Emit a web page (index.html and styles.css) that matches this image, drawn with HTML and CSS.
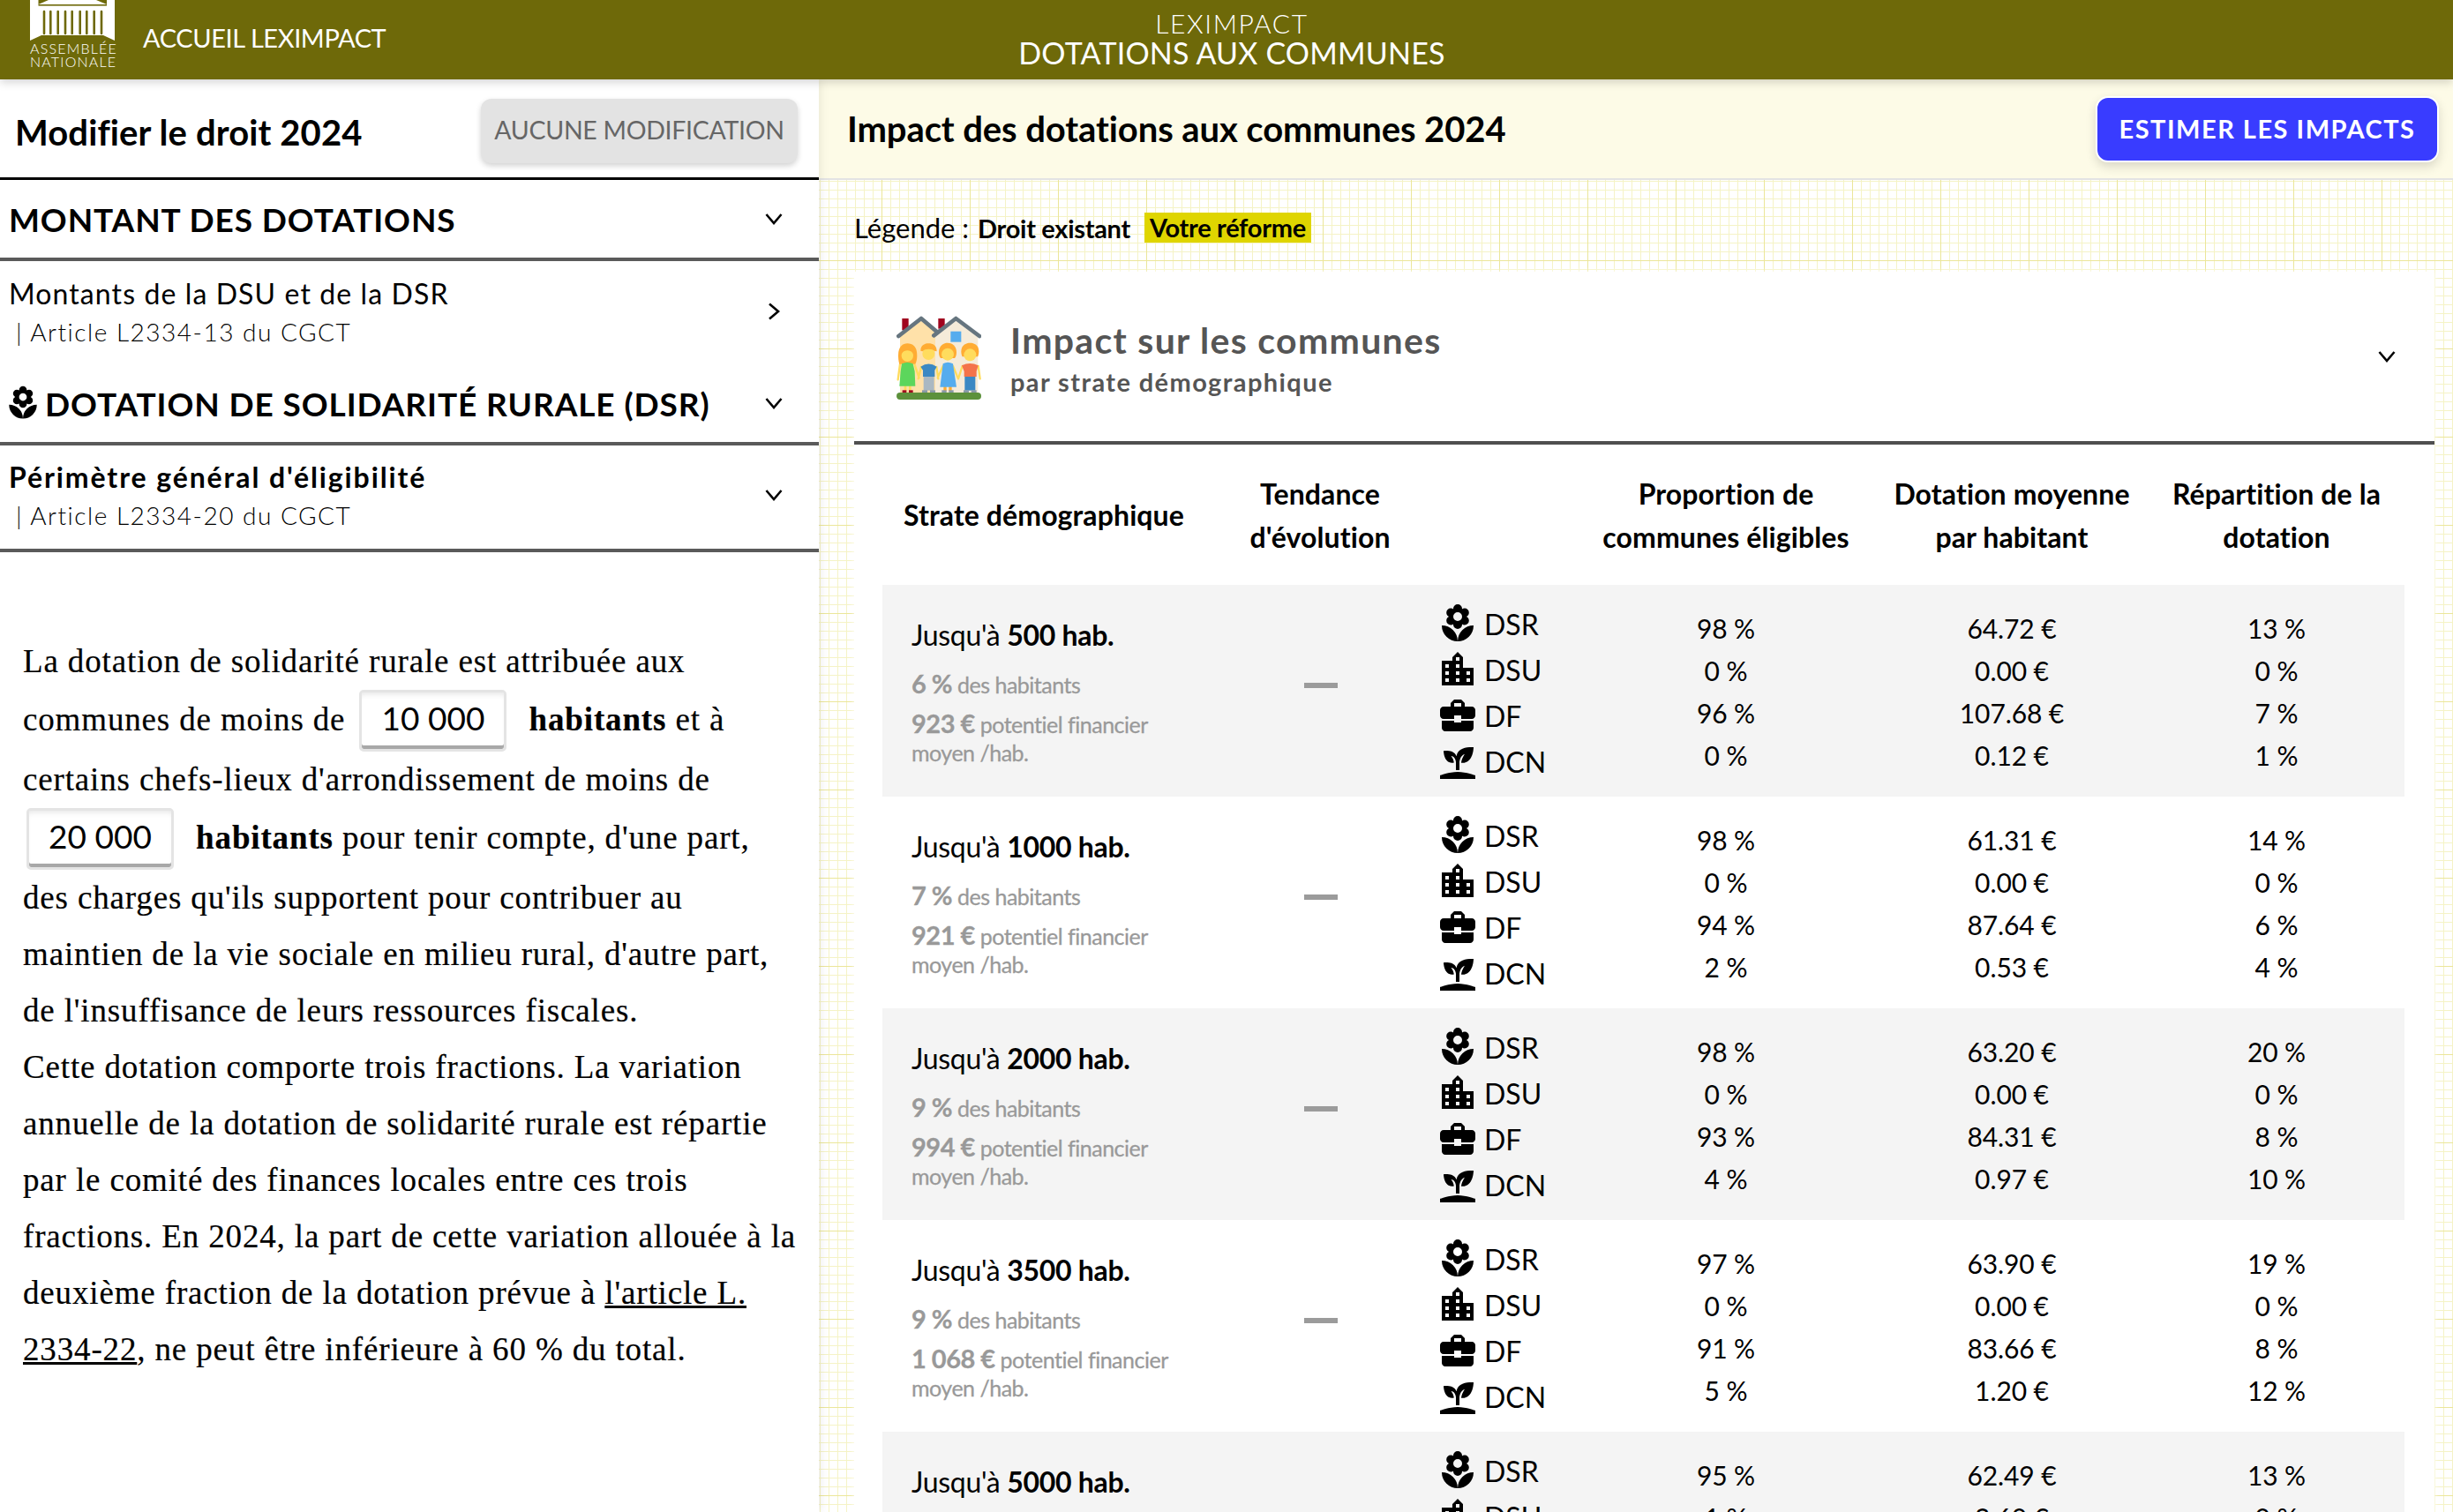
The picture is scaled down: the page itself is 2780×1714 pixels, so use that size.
FILE: index.html
```html
<!DOCTYPE html>
<html lang="fr">
<head>
<meta charset="utf-8">
<title>LexImpact - Dotations aux communes</title>
<link rel="stylesheet" href="styles.css">
</head>
<body>
<svg class="sprites" aria-hidden="true">
  <symbol id="i-dsr" viewBox="0 0 24 24"><path d="M3 13a9 9 0 0 0 9 9a9 9 0 0 0-9-9m9 9a9 9 0 0 0 9-9a9 9 0 0 0-9 9M5.6 10.25a2.5 2.5 0 0 0 2.5 2.5c.53 0 1.01-.16 1.42-.44l-.02.19A2.5 2.5 0 0 0 12 15a2.5 2.5 0 0 0 2.5-2.5l-.02-.19c.4.28.89.44 1.42.44a2.5 2.5 0 0 0 2.5-2.5c0-1-.59-1.85-1.43-2.25c.84-.4 1.43-1.25 1.43-2.25a2.5 2.5 0 0 0-2.5-2.5c-.53 0-1.02.16-1.42.44l.02-.19A2.5 2.5 0 0 0 12 1a2.5 2.5 0 0 0-2.5 2.5l.02.19c-.4-.28-.89-.44-1.42-.44a2.5 2.5 0 0 0-2.5 2.5c0 1 .59 1.85 1.43 2.25c-.84.4-1.43 1.25-1.43 2.25M12 5.5a2.5 2.5 0 0 1 2.5 2.5a2.5 2.5 0 0 1-2.5 2.5A2.5 2.5 0 0 1 9.5 8A2.5 2.5 0 0 1 12 5.5z"/></symbol>
  <symbol id="i-dsu" viewBox="0 0 24 24"><path d="M19,15H17V13H19M19,19H17V17H19M13,7H11V5H13M13,11H11V9H13M13,15H11V13H13M13,19H11V17H13M7,11H5V9H7M7,15H5V13H7M7,19H5V17H7M15,11V5L12,2L9,5V7H3V21H21V11H15Z"/></symbol>
  <symbol id="i-df" viewBox="0 0 24 24"><path d="M10 16V15H3L3 19C3 20.11 3.89 21 5 21H19C20.11 21 21 20.11 21 19V15H14V16H10M20 7H16V5L14 3H10L8 5V7H4C2.9 7 2 7.9 2 9V12C2 13.11 2.89 14 4 14H10V12H14V14H20C21.1 14 22 13.1 22 12V9C22 7.9 21.1 7 20 7M14 7H10V5H14V7Z"/></symbol>
  <symbol id="i-dcn" viewBox="0 0 24 24"><path d="M2,22V20C2,20 7,18 12,18C17,18 22,20 22,20V22H2M11.3,9.1C10.1,5.2 4,6.1 4,6.1C4,6.1 4.2,13.9 9.9,12.7C9.5,9.8 8,9 8,9C10.8,9 11,12.4 11,12.4V17C11.3,17 11.6,17 12,17C12.3,17 12.7,17 13,17V12.8C13,12.8 13,8.9 16,7.9C16,7.9 14,10.9 14,12.9C21,13.6 21,4 21,4C21,4 12.1,3 11.3,9.1Z"/></symbol>
  <symbol id="i-down" viewBox="0 0 20 14"><path d="M1.5 2 L10 12 L18.5 2" fill="none" stroke="currentColor" stroke-width="2.6"/></symbol>
  <symbol id="i-right" viewBox="0 0 14 20"><path d="M2 1.5 L12 10 L2 18.5" fill="none" stroke="currentColor" stroke-width="2.6"/></symbol>
</svg>

<header class="topbar">
  <a class="brand">
    <span class="logo">
      <svg class="logo-mark" viewBox="0 0 96 46">
        <polygon class="logo-white" points="0,0 96,0 96,46 83,40 13,40 0,46"/>
        <polygon class="logo-olive" points="9.5,0 21,0 9.5,5"/>
        <polygon class="logo-olive" points="87,0 75,0 87,5"/>
        <rect class="logo-olive" x="9.5" y="5" width="77.5" height="1.6"/>
        <g class="logo-cols">
          <path d="M16 13V38M23.3 13V38M31.7 13V38M40 13V38M47.7 13V38M56.7 13V38M64.3 13V38M72.7 13V38M81 13V38"/>
        </g>
      </svg>
      <span class="logo-text">ASSEMBLÉE<br>NATIONALE</span>
    </span>
    <span class="brand-link">ACCUEIL LEXIMPACT</span>
  </a>
  <div class="app-title">
    <div class="app-kicker">LEXIMPACT</div>
    <div class="app-name">DOTATIONS AUX COMMUNES</div>
  </div>
</header>

<main class="page">
  <aside class="law">
    <div class="law-head">
      <h2 class="law-title">Modifier le droit 2024</h2>
      <button class="btn-none">AUCUNE MODIFICATION</button>
    </div>

    <div class="acc acc-major acc-line">
      <span class="acc-caps">MONTANT DES DOTATIONS</span>
      <svg class="chev"><use href="#i-down"/></svg>
    </div>
    <div class="acc acc-sub">
      <div class="acc-block">
        <div class="acc-label">Montants de la DSU et de la DSR</div>
        <div class="acc-art">| Article L2334-13 du CGCT</div>
      </div>
      <svg class="chev-r"><use href="#i-right"/></svg>
    </div>
    <div class="acc acc-dsr acc-line">
      <span class="acc-caps"><svg class="acc-flower"><use href="#i-dsr"/></svg>DOTATION DE SOLIDARITÉ RURALE (DSR)</span>
      <svg class="chev"><use href="#i-down"/></svg>
    </div>
    <div class="acc acc-sub acc-per acc-line">
      <div class="acc-block">
        <div class="acc-label acc-strong">Périmètre général d'éligibilité</div>
        <div class="acc-art">| Article L2334-20 du CGCT</div>
      </div>
      <svg class="chev"><use href="#i-down"/></svg>
    </div>

    <p class="law-text">La dotation de solidarité rurale est attribuée aux<br>communes de moins de <span class="field">10 000</span> <b>habitants</b> et à<br>certains chefs-lieux d'arrondissement de moins de<br><span class="field field-first">20 000</span> <b>habitants</b> pour tenir compte, d'une part,<br>des charges qu'ils supportent pour contribuer au<br>maintien de la vie sociale en milieu rural, d'autre part,<br>de l'insuffisance de leurs ressources fiscales.<br>Cette dotation comporte trois fractions. La variation<br>annuelle de la dotation de solidarité rurale est répartie<br>par le comité des finances locales entre ces trois<br>fractions. En 2024, la part de cette variation allouée à la<br>deuxième fraction de la dotation prévue à <a class="law-link">l'article L.<br>2334-22</a>, ne peut être inférieure à 60 % du total.</p>
  </aside>

  <section class="impact">
    <div class="band">
      <h1 class="band-title">Impact des dotations aux communes 2024</h1>
      <button class="btn-run">ESTIMER LES IMPACTS</button>
    </div>
    <div class="sheet">
      <div class="legend">
        <span class="legend-label">Légende :</span>
        <span class="legend-old">Droit existant</span>
        <span class="legend-new">Votre réforme</span>
      </div>
      <div class="card">
        <div class="card-head">
          <svg class="family" viewBox="48 51 288 285">
            <path fill="#ffe1a9" d="M60 120L132 68L190 110V315H60z"/>
            <path fill="#f5ebd9" d="M180 120L250 68L325 120V315H180z"/>
            <rect fill="#55acee" x="232" y="104" width="36" height="36"/>
            <rect fill="#a0041e" x="67" y="60" width="22" height="40"/>
            <rect fill="#a0041e" x="190" y="60" width="22" height="35"/>
            <path fill="none" stroke="#66757f" stroke-width="14" stroke-linecap="round" stroke-linejoin="round" d="M55 120L132 60L185 105M175 118L250 60L330 120"/>
            <g fill="none" stroke="#ffdc5d" stroke-width="7" stroke-linecap="round">
              <path d="M60 215L53 268M110 218L125 262M132 225L122 265M184 225L190 265M206 222L188 262M240 222L258 265M272 222L258 265M326 222L332 265"/>
            </g>
            <rect fill="#ffdc5d" x="74" y="285" width="8" height="22"/><rect fill="#ffdc5d" x="90" y="285" width="8" height="22"/>
            <rect fill="#a0041e" x="68" y="304" width="14" height="8"/><rect fill="#a0041e" x="90" y="304" width="14" height="8"/>
            <path fill="#ffac33" d="M54 185C54 155 70 145 85 145C102 145 118 155 118 185C118 205 112 215 112 215H58C58 215 54 205 54 185z"/>
            <circle fill="#ffdc5d" cx="85" cy="187" r="20"/>
            <path fill="#ffac33" d="M65 180C70 165 100 165 105 180C105 160 65 160 65 180z"/>
            <path fill="#5cd65c" d="M66 214Q85 204 104 214L110 240L112 290H58L62 240z"/>
            <path fill="#ffac33" d="M130 170C130 150 145 145 157 145C172 145 185 152 185 172L178 170C170 165 145 165 136 172z"/>
            <circle fill="#ffdc5d" cx="157" cy="180" r="21"/>
            <path fill="#ffac33" d="M135 172C135 150 180 150 180 172C170 162 145 162 135 172z"/>
            <rect fill="#aab8c2" x="140" y="250" width="36" height="55"/>
            <rect fill="#8899a6" x="135" y="304" width="18" height="8"/><rect fill="#8899a6" x="162" y="304" width="18" height="8"/>
            <path fill="#3b88c3" d="M130 224Q157 205 185 224L178 236V258H138V236z"/>
            <path fill="#ffac33" d="M192 175C192 150 210 143 222 143C236 143 252 152 252 175C252 190 246 195 246 195H198C198 195 192 190 192 175z"/>
            <circle fill="#ffdc5d" cx="222" cy="182" r="21"/>
            <rect fill="#ffac33" x="208" y="290" width="10" height="18"/><rect fill="#ffac33" x="226" y="290" width="10" height="18"/>
            <rect fill="#8899a6" x="202" y="304" width="16" height="8"/><rect fill="#8899a6" x="226" y="304" width="16" height="8"/>
            <path fill="#55acee" d="M206 214Q222 204 240 214L252 293H196z"/>
            <path fill="#ffac33" d="M268 172C268 150 285 143 298 143C312 143 328 150 328 172C328 185 324 190 324 190H272C272 190 268 185 268 172z"/>
            <circle fill="#ffdc5d" cx="298" cy="184" r="21"/>
            <rect fill="#3b88c3" x="280" y="250" width="36" height="55"/>
            <rect fill="#8899a6" x="276" y="304" width="18" height="8"/><rect fill="#8899a6" x="302" y="304" width="18" height="8"/>
            <path fill="#f4734a" d="M270 220Q298 206 326 220L320 240V258H278V240z"/>
            <rect fill="#5c913b" x="48" y="312" width="288" height="24" rx="12"/>
          </svg>
          <div class="card-titles">
            <div class="card-title">Impact sur les communes</div>
            <div class="card-sub">par strate démographique</div>
          </div>
          <svg class="chev"><use href="#i-down"/></svg>
        </div>

        <div class="table">
          <div class="thead grid">
            <div class="th th-strate">Strate démographique</div>
            <div class="th">Tendance<br>d'évolution</div>
            <div class="th"></div>
            <div class="th">Proportion de<br>communes éligibles</div>
            <div class="th">Dotation moyenne<br>par habitant</div>
            <div class="th">Répartition de la<br>dotation</div>
          </div>

          <div class="row row-alt grid">
            <div class="strate">
              <div class="strate-name">Jusqu'à <b>500 hab.</b></div>
              <div class="strate-pop"><b>6 %</b> des habitants</div>
              <div class="strate-fin"><b>923 €</b> potentiel financier<br>moyen /hab.</div>
            </div>
            <div class="trend"><span class="dash"></span></div>
            <div class="kinds">
              <div class="kind"><svg class="ico"><use href="#i-dsr"/></svg>DSR</div>
              <div class="kind"><svg class="ico"><use href="#i-dsu"/></svg>DSU</div>
              <div class="kind"><svg class="ico"><use href="#i-df"/></svg>DF</div>
              <div class="kind"><svg class="ico"><use href="#i-dcn"/></svg>DCN</div>
            </div>
            <div class="vals"><div>98 %</div><div>0 %</div><div>96 %</div><div>0 %</div></div>
            <div class="vals"><div>64.72 €</div><div>0.00 €</div><div>107.68 €</div><div>0.12 €</div></div>
            <div class="vals"><div>13 %</div><div>0 %</div><div>7 %</div><div>1 %</div></div>
          </div>

          <div class="row grid">
            <div class="strate">
              <div class="strate-name">Jusqu'à <b>1000 hab.</b></div>
              <div class="strate-pop"><b>7 %</b> des habitants</div>
              <div class="strate-fin"><b>921 €</b> potentiel financier<br>moyen /hab.</div>
            </div>
            <div class="trend"><span class="dash"></span></div>
            <div class="kinds">
              <div class="kind"><svg class="ico"><use href="#i-dsr"/></svg>DSR</div>
              <div class="kind"><svg class="ico"><use href="#i-dsu"/></svg>DSU</div>
              <div class="kind"><svg class="ico"><use href="#i-df"/></svg>DF</div>
              <div class="kind"><svg class="ico"><use href="#i-dcn"/></svg>DCN</div>
            </div>
            <div class="vals"><div>98 %</div><div>0 %</div><div>94 %</div><div>2 %</div></div>
            <div class="vals"><div>61.31 €</div><div>0.00 €</div><div>87.64 €</div><div>0.53 €</div></div>
            <div class="vals"><div>14 %</div><div>0 %</div><div>6 %</div><div>4 %</div></div>
          </div>

          <div class="row row-alt grid">
            <div class="strate">
              <div class="strate-name">Jusqu'à <b>2000 hab.</b></div>
              <div class="strate-pop"><b>9 %</b> des habitants</div>
              <div class="strate-fin"><b>994 €</b> potentiel financier<br>moyen /hab.</div>
            </div>
            <div class="trend"><span class="dash"></span></div>
            <div class="kinds">
              <div class="kind"><svg class="ico"><use href="#i-dsr"/></svg>DSR</div>
              <div class="kind"><svg class="ico"><use href="#i-dsu"/></svg>DSU</div>
              <div class="kind"><svg class="ico"><use href="#i-df"/></svg>DF</div>
              <div class="kind"><svg class="ico"><use href="#i-dcn"/></svg>DCN</div>
            </div>
            <div class="vals"><div>98 %</div><div>0 %</div><div>93 %</div><div>4 %</div></div>
            <div class="vals"><div>63.20 €</div><div>0.00 €</div><div>84.31 €</div><div>0.97 €</div></div>
            <div class="vals"><div>20 %</div><div>0 %</div><div>8 %</div><div>10 %</div></div>
          </div>

          <div class="row grid">
            <div class="strate">
              <div class="strate-name">Jusqu'à <b>3500 hab.</b></div>
              <div class="strate-pop"><b>9 %</b> des habitants</div>
              <div class="strate-fin"><b>1 068 €</b> potentiel financier<br>moyen /hab.</div>
            </div>
            <div class="trend"><span class="dash"></span></div>
            <div class="kinds">
              <div class="kind"><svg class="ico"><use href="#i-dsr"/></svg>DSR</div>
              <div class="kind"><svg class="ico"><use href="#i-dsu"/></svg>DSU</div>
              <div class="kind"><svg class="ico"><use href="#i-df"/></svg>DF</div>
              <div class="kind"><svg class="ico"><use href="#i-dcn"/></svg>DCN</div>
            </div>
            <div class="vals"><div>97 %</div><div>0 %</div><div>91 %</div><div>5 %</div></div>
            <div class="vals"><div>63.90 €</div><div>0.00 €</div><div>83.66 €</div><div>1.20 €</div></div>
            <div class="vals"><div>19 %</div><div>0 %</div><div>8 %</div><div>12 %</div></div>
          </div>

          <div class="row row-alt grid">
            <div class="strate">
              <div class="strate-name">Jusqu'à <b>5000 hab.</b></div>
            </div>
            <div class="trend"></div>
            <div class="kinds">
              <div class="kind"><svg class="ico"><use href="#i-dsr"/></svg>DSR</div>
              <div class="kind"><svg class="ico"><use href="#i-dsu"/></svg>DSU</div>
            </div>
            <div class="vals"><div>95 %</div><div>1 %</div></div>
            <div class="vals"><div>62.49 €</div><div>2.60 €</div></div>
            <div class="vals"><div>13 %</div><div>0 %</div></div>
          </div>
        </div>
      </div>
    </div>
  </section>
</main>
</body>
</html>
```
FILE: styles.css
```css
* { box-sizing: border-box; }
html, body { margin: 0; padding: 0; }
body {
  width: 2780px;
  height: 1714px;
  overflow: hidden;
  font-family: Lato, "Noto Sans", sans-serif;
  color: #000;
  background: #fff;
}
h1, h2, p { margin: 0; }
button { font-family: inherit; cursor: pointer; }
.sprites { position: absolute; width: 0; height: 0; }

/* Top bar */
.topbar {
  position: relative;
  z-index: 3;
  height: 90px;
  background: #6e6909;
  color: #fff;
  display: grid;
  grid-template-columns: 1fr auto 1fr;
  align-items: center;
  box-shadow: 0 3px 10px rgba(0, 0, 0, .18);
}
.brand { display: flex; align-items: flex-start; padding-left: 34px; height: 90px; }
.logo { display: flex; flex-direction: column; width: 96px; }
.logo-mark { display: block; width: 96px; height: 46px; }
.logo-white { fill: #fff; }
.logo-olive { fill: #6e6909; }
.logo-cols path { stroke: #6e6909; stroke-width: 2.6; stroke-linecap: round; fill: none; }
.logo-text {
  font-size: 16px;
  font-weight: 300;
  line-height: 15px;
  letter-spacing: 1.2px;
  white-space: nowrap;
  padding-top: 1px;
}
.brand-link { font-size: 29px; line-height: 90px; margin-left: 32px; letter-spacing: -.4px; margin-top: -2px; }
.app-title { text-align: center; padding: 0 0 5px 12px; }
.app-kicker { font-size: 30px; font-weight: 300; line-height: 33px; letter-spacing: 1.6px; }
.app-name { font-size: 34px; line-height: 33px; letter-spacing: .2px; }

/* Layout */
.page { display: flex; height: 1624px; }
.law {
  position: relative;
  z-index: 2;
  width: 928px;
  flex: none;
  background: #fff;
  box-shadow: 2px 0 10px rgba(0, 0, 0, .08);
}
.impact { flex: 1; min-width: 0; }

/* Left column */
.law-head {
  height: 114px;
  border-bottom: 3px solid #000;
  display: flex;
  justify-content: space-between;
  align-items: center;
  padding: 0 24px 0 17px;
}
.law-title { font-size: 40px; font-weight: 700; letter-spacing: .1px; padding-top: 8px; }
.btn-none {
  height: 73px;
  width: 359px;
  margin-top: 5px;
  border: 0;
  border-radius: 12px;
  background: #e3e3e3;
  color: #666;
  font-size: 28.5px;
  letter-spacing: -.3px;
  padding: 0 0 3px;
  box-shadow: 0 3px 6px rgba(0, 0, 0, .18);
}
.acc {
  display: flex;
  justify-content: space-between;
  align-items: center;
  padding: 0 41px 0 10px;
}
.acc-line { border-bottom: 4px solid #5a5a5a; }
.acc-major { height: 92px; }
.acc-sub { height: 113px; }
.acc-dsr { height: 96px; padding-top: 4px; }
.acc-per { height: 121px; padding-bottom: 5px; }
.acc-block { padding-top: 2px; }
.acc-caps { font-size: 37px; font-weight: 700; display: flex; align-items: center; white-space: nowrap; letter-spacing: .9px; }
.acc-flower { width: 42px; height: 42px; margin-left: -5px; margin-right: 4px; flex: none; }
.acc-label { font-size: 32px; line-height: 44px; letter-spacing: 1.1px; }
.acc-strong { font-weight: 700; letter-spacing: 1.9px; }
.acc-art { font-size: 28px; font-weight: 300; line-height: 42px; padding-left: 8px; letter-spacing: 1.5px; }
.chev { width: 20px; height: 14px; flex: none; }
.chev-r { width: 14px; height: 20px; flex: none; margin-right: 3px; }

.law-text {
  padding: 92px 0 0 26px;
  font-family: "Liberation Serif", serif;
  font-size: 37px;
  line-height: 64px;
  letter-spacing: .85px;
  white-space: nowrap;
  -webkit-text-stroke: .2px #000;
}
.field {
  display: inline-block;
  width: 167px;
  height: 70px;
  margin: 0 15px 0 6px;
  border: 3px solid #e4e4e4;
  border-radius: 5px;
  background: #fff;
  box-shadow: inset 0 6px 6px -4px #e6e6e6, inset 0 -4px 0 #a8a8a8;
  font-family: Lato, sans-serif;
  font-size: 37px;
  line-height: 57px;
  text-align: center;
  letter-spacing: 0;
  -webkit-text-stroke: 0;
}
.field-first { margin-left: 4px; }
.law-link { color: inherit; text-decoration: underline; }

/* Right column */
.band {
  height: 114px;
  background: #fdfbe7;
  border-bottom: 2px solid #e3e3e3;
  display: flex;
  justify-content: space-between;
  align-items: center;
  padding: 0 16px 0 32px;
}
.band-title { font-size: 40px; font-weight: 700; letter-spacing: -.1px; }
.btn-run {
  width: 389px;
  height: 75px;
  border: 2px solid #fff;
  border-radius: 14px;
  background: #393cff;
  color: #fff;
  font-size: 29px;
  font-weight: 700;
  letter-spacing: 1.5px;
  padding: 0 0 2px;
  box-shadow: 0 5px 12px rgba(0, 0, 0, .14);
}
.sheet {
  height: 1510px;
  overflow: hidden;
  background-color: #fff;
  background-image:
    linear-gradient(to right, #ebe69a 1px, transparent 1px),
    linear-gradient(to bottom, #ebe69a 1px, transparent 1px),
    linear-gradient(to right, #f5f3c6 1px, transparent 1px),
    linear-gradient(to bottom, #f5f3c6 1px, transparent 1px);
  background-size: 100px 100px, 100px 100px, 10px 10px, 10px 10px;
  background-position: 71px 0, 0 91px, 1px 0, 0 1px;
}
.legend { height: 104px; display: flex; align-items: center; padding: 4px 0 0 40px; }
.legend-label { font-size: 31px; margin-right: 10px; }
.legend-old, .legend-new { font-size: 29px; font-weight: 700; letter-spacing: -.3px; }
.legend-new { background: #dfd500; margin-left: 16px; padding: 0 6px; height: 34px; line-height: 34px; }

.card { margin: 0 21px 0 40px; background: #fff; box-shadow: 0 0 6px rgba(255, 255, 255, .9); }
.card-head {
  height: 196px;
  border-bottom: 4px solid #4f4f4f;
  display: flex;
  align-items: center;
  padding: 0 44px 0 48px;
}
.family { width: 96px; height: 95px; flex: none; margin-top: 3px; }
.card-titles { flex: 1; padding: 7px 0 0 33px; color: #555; }
.card-title { font-size: 41px; font-weight: 700; line-height: 48px; letter-spacing: 1.3px; }
.card-sub { font-size: 29px; font-weight: 700; line-height: 40px; letter-spacing: 1.4px; margin-top: 3px; }

.table { margin-left: 32px; width: 1725px; }
.grid { display: grid; grid-template-columns: 364px 264px 159px 338px 310px 290px; }
.thead { height: 159px; align-items: center; }
.th { font-size: 32px; font-weight: 700; line-height: 49px; text-align: center; letter-spacing: .1px; }
.th-strate { text-align: left; padding-left: 24px; white-space: nowrap; }
.row { height: 240px; }
.row-alt { background: #f4f4f4; }
.strate { padding: 33px 0 0 33px; }
.strate-name { font-size: 32px; line-height: 48px; letter-spacing: -.3px; }
.strate-pop { font-size: 25px; line-height: 30px; color: #999; margin-top: 16px; letter-spacing: -.5px; -webkit-text-stroke: .3px #999; }
.strate-pop b, .strate-fin b { font-size: 29px; }
.strate-fin { font-size: 25px; line-height: 32px; color: #999; margin-top: 13px; letter-spacing: -.5px; -webkit-text-stroke: .3px #999; }
.trend { display: flex; justify-content: center; padding: 111px 0 0 2px; }
.dash { display: block; width: 38px; height: 6px; background: #9b9b9b; }
.kinds { padding-top: 18px; }
.kind { display: flex; align-items: center; height: 52px; font-size: 32px; }
.ico { width: 48px; height: 48px; margin-right: 6px; flex: none; }
.vals { padding-top: 25px; text-align: center; font-size: 30px; line-height: 48px; letter-spacing: -.1px; }
```
